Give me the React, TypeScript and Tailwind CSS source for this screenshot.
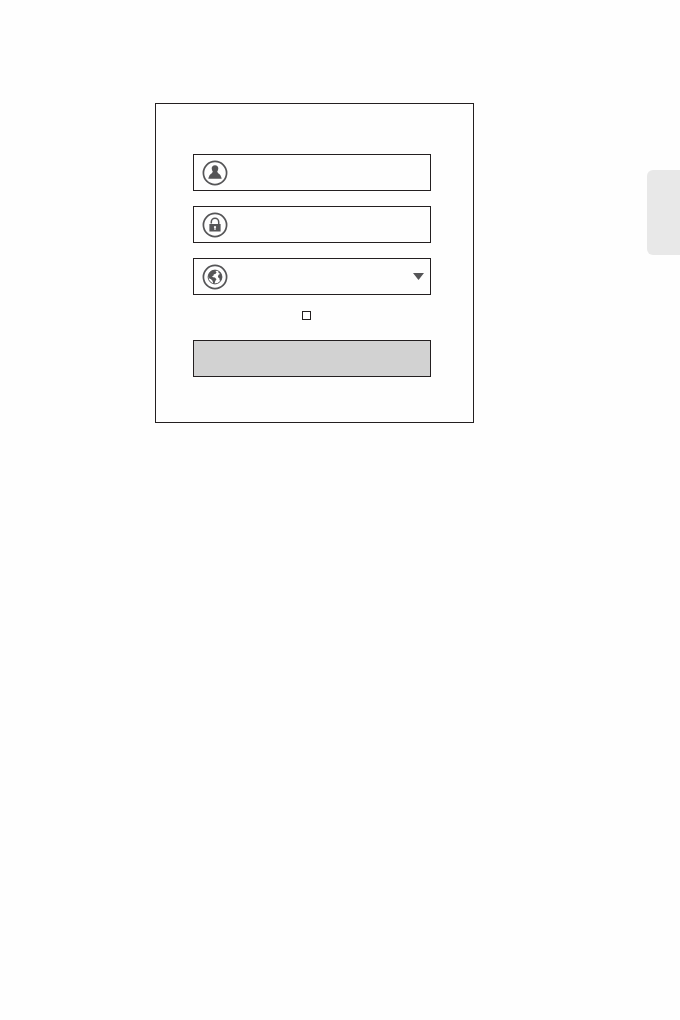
import type { ReactNode } from "react";

function RoundIcon({ children }: { children: ReactNode }) {
  return (
    <svg viewBox="0 0 26 26" className="size-[26px] shrink-0 text-[#555557]" fill="currentColor" aria-hidden="true">
      <circle cx="13" cy="13" r="11.6" fill="none" stroke="currentColor" strokeWidth="1.7" />
      {children}
    </svg>
  );
}

function Field({ id, label, icon, children }: { id: string; label: string; icon: ReactNode; children: ReactNode }) {
  return (
    <div className="flex h-[37px] items-center gap-2 border border-[#231f20] pr-1.5 pl-2">
      <label htmlFor={id} aria-label={label}>
        <RoundIcon>{icon}</RoundIcon>
      </label>
      {children}
    </div>
  );
}

export default function App() {
  return (
    <main className="grid min-h-screen grid-cols-[155fr_319fr_173fr_33px] items-start bg-[#fefefe] pt-[103px] font-['Liberation_Sans',sans-serif] text-sm text-[#231f20]">
      <form
        className="col-start-2 flex flex-col gap-[15px] border border-[#231f20] pt-[50px] pr-[42px] pb-[45px] pl-[37px]"
        onSubmit={(event) => event.preventDefault()}
      >
        <Field
          id="username"
          label="User name"
          icon={
            <path d="M13 5.2c2.1 0 3.4 1.4 3.3 3.4-.1 1.4-.5 2.4-1.1 3.1l1 1.6 1.6 1.2c.9 1 1.5 2.6 1.9 4.3H6.3c.4-1.7 1-3.3 1.9-4.3l1.6-1.2 1-1.6c-.6-.7-1-1.7-1.1-3.1-.1-2 1.2-3.4 3.3-3.4Z" />
          }
        >
          <input id="username" type="text" autoComplete="username" className="h-full min-w-0 flex-1 bg-transparent outline-none" />
        </Field>

        <Field
          id="password"
          label="Password"
          icon={
            <>
              <path d="M9.3 11.5V10a3.7 3.7 0 0 1 7.4 0V13" fill="none" stroke="currentColor" strokeWidth="1.5" />
              <path fillRule="evenodd" d="M7.4 12.1h11.2v7.4H7.4ZM13 13.9a1.2 1.2 0 0 0-.6 2.2v2h1.2v-2a1.2 1.2 0 0 0-.6-2.2Z" />
            </>
          }
        >
          <input id="password" type="password" autoComplete="current-password" className="h-full min-w-0 flex-1 bg-transparent outline-none" />
        </Field>

        <Field
          id="language"
          label="Language"
          icon={
            <>
              <circle cx="13" cy="13" r="6.9" fill="none" stroke="currentColor" strokeWidth="1" />
              <path d="M6.2 12.6c.2-3.2 2.4-6 5.5-6.6l2.6.2-.7 1.3 1 .8-1.2 1.6-1.5.4-.5 1.5-1.4.7 1 .8 1.9.3 1.6 1.7-1.2 1.7-.8 2.7-1.2.2-.8-3.1-1.7-1.8-1.2-.3Z" />
              <path d="m16.8 7.4 1.2.7 1.4 2 .7 3-.4 2.1-1.2 1.9-.9-.8-.2-2-1-.6-.5-1.5.9-1.6 1-.4-.5-1.1-.9-.1Z" />
            </>
          }
        >
          <div className="grid h-full min-w-0 flex-1 grid-cols-1 items-center">
            <select id="language" className="col-start-1 row-start-1 h-full w-full appearance-none bg-transparent outline-none" />
            <svg viewBox="0 0 11 7" className="pointer-events-none col-start-1 row-start-1 h-[7px] w-[11px] justify-self-end fill-[#555557]" aria-hidden="true">
              <path d="M0 0h11L5.5 7Z" />
            </svg>
          </div>
        </Field>

        <div className="flex h-[15px] items-start justify-center pt-px pr-3">
          <input
            id="remember"
            type="checkbox"
            aria-label="Remember me"
            className="size-[9px] appearance-none border border-[#231f20] bg-white checked:bg-[#555557]"
          />
        </div>

        <button type="submit" aria-label="Log in" className="h-[37px] border border-[#231f20] bg-[#d2d2d2]" />
      </form>

      <aside className="col-start-4 mt-[67px] h-[85px] rounded-l-md bg-[#e8e8e8]" />
    </main>
  );
}
